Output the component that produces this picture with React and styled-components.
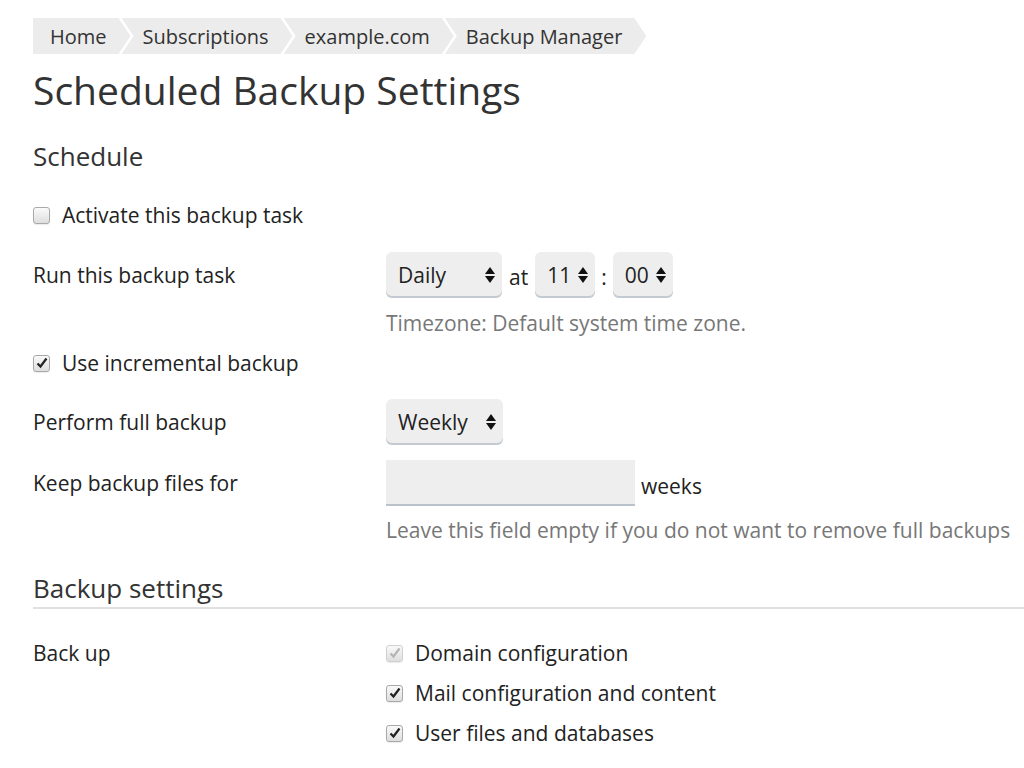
import React from 'react';
import styled, { createGlobalStyle } from 'styled-components';

const GlobalStyle = createGlobalStyle`
  html, body {
    margin: 0;
    padding: 0;
    background: #fff;
  }
  body {
    font-family: "Open Sans", "Noto Sans", sans-serif;
    color: #222;
    font-size: 21px;
    overflow: hidden;
  }
`;

const Page = styled.div`
  padding: 18px 0 0 33px;
  width: 1100px;
`;

const Crumbs = styled.nav`
  display: flex;
  height: 36px;
`;

const Crumb = styled.a`
  display: flex;
  align-items: center;
  height: 36px;
  background: #ececec;
  color: #333;
  text-decoration: none;
  font-size: 20px;
  padding: 0 24px 0 ${p => (p.$first ? '17px' : '21px')};
  margin-left: ${p => (p.$first ? '0' : '-9px')};
  clip-path: ${p =>
    p.$first
      ? 'polygon(0 0, calc(100% - 12px) 0, 100% 50%, calc(100% - 12px) 100%, 0 100%)'
      : 'polygon(0 0, calc(100% - 12px) 0, 100% 50%, calc(100% - 12px) 100%, 0 100%, 12px 50%)'};
`;

const Title = styled.h1`
  margin: 12px 0 0;
  font-size: 39px;
  line-height: 48px;
  font-weight: 400;
  color: #333;
`;

const SectionTitle = styled.h2`
  margin: ${p => p.$top}px 0 0;
  font-size: 26px;
  line-height: 32px;
  font-weight: 400;
  color: #333;
  padding-bottom: ${p => (p.$line ? '3px' : '0')};
  border-bottom: ${p => (p.$line ? '2px solid #e0e0e0' : 'none')};
`;

const Row = styled.div`
  display: flex;
  align-items: ${p => (p.$top ? 'flex-start' : 'center')};
  margin-top: ${p => p.$gap}px;
  min-height: 28px;
`;

const Label = styled.div`
  width: 353px;
  flex-shrink: 0;
  line-height: 28px;
`;

const Controls = styled.div`
  display: flex;
  align-items: center;
`;

const Stack = styled.div`
  display: flex;
  flex-direction: column;
  gap: 12px;
`;

const Hint = styled.div`
  margin: ${p => p.$gap}px 0 0 353px;
  color: #777;
  line-height: 28px;
`;

const CheckLine = styled.label`
  display: flex;
  align-items: center;
  gap: 12px;
  line-height: 28px;
`;

const Box = styled.span`
  width: 15px;
  height: 15px;
  border-radius: 3px;
  border: 1px solid ${p => (p.$disabled ? '#d0d0d0' : '#a9a9a9')};
  background: linear-gradient(#fafafa, #dedede);
  display: flex;
  align-items: center;
  justify-content: center;
  box-shadow: 0 1px 1px rgba(0, 0, 0, 0.08);
  flex-shrink: 0;
`;

const Select = styled.div`
  display: flex;
  align-items: center;
  justify-content: space-between;
  box-sizing: border-box;
  width: ${p => p.$w}px;
  height: 46px;
  padding: 0 6px 0 12px;
  background: #eeeeee;
  border-radius: 6px;
  box-shadow: inset 0 -2px 0 #c3cad1;
  color: #222;
`;

const Sep = styled.span`
  margin: 0 ${p => p.$m}px;
  line-height: 28px;
  padding-top: 4px;
`;

const TextField = styled.div`
  box-sizing: border-box;
  width: 249px;
  height: 46px;
  background: #eeeeee;
  border-bottom: 2px solid #b9c2ca;
`;

const Unit = styled.span`
  margin-left: 6px;
  padding-top: 6px;
`;

const Arrows = () => (
  <svg width="12" height="18" viewBox="0 0 12 18">
    <path d="M6 1 L11 8 L1 8 Z" fill="#111" />
    <path d="M1 10 L11 10 L6 17 Z" fill="#111" />
  </svg>
);

const Checkbox = ({ checked, disabled, children }) => (
  <CheckLine>
    <Box $disabled={disabled}>
      {checked && (
        <svg width="12" height="12" viewBox="0 0 12 12">
          <path
            d="M1.5 6.5 L4.5 9.5 L10.5 1.5"
            fill="none"
            stroke={disabled ? '#b5b5b5' : '#222'}
            strokeWidth="2.2"
          />
        </svg>
      )}
    </Box>
    {children}
  </CheckLine>
);

export default function App() {
  return (
    <Page>
      <GlobalStyle />
      <Crumbs>
        <Crumb $first href="#">Home</Crumb>
        <Crumb href="#">Subscriptions</Crumb>
        <Crumb href="#">example.com</Crumb>
        <Crumb href="#">Backup Manager</Crumb>
      </Crumbs>
      <Title>Scheduled Backup Settings</Title>

      <SectionTitle $top={26}>Schedule</SectionTitle>
      <Row $gap={29}>
        <Checkbox>Activate this backup task</Checkbox>
      </Row>
      <Row $gap={23}>
        <Label>Run this backup task</Label>
        <Controls>
          <Select $w={116}>Daily<Arrows /></Select>
          <Sep $m={7}>at</Sep>
          <Select $w={60}>11<Arrows /></Select>
          <Sep $m={6}>:</Sep>
          <Select $w={60}>00<Arrows /></Select>
        </Controls>
      </Row>
      <Hint $gap={11}>Timezone: Default system time zone.</Hint>
      <Row $gap={12}>
        <Checkbox checked>Use incremental backup</Checkbox>
      </Row>
      <Row $gap={22}>
        <Label>Perform full backup</Label>
        <Select $w={117}>Weekly<Arrows /></Select>
      </Row>
      <Row $gap={15}>
        <Label>Keep backup files for</Label>
        <Controls>
          <TextField />
          <Unit>weeks</Unit>
        </Controls>
      </Row>
      <Hint $gap={10}>Leave this field empty if you do not want to remove full backups</Hint>

      <SectionTitle $top={28} $line>Backup settings</SectionTitle>
      <Row $gap={30} $top>
        <Label>Back up</Label>
        <Stack>
          <Checkbox checked disabled>Domain configuration</Checkbox>
          <Checkbox checked>Mail configuration and content</Checkbox>
          <Checkbox checked>User files and databases</Checkbox>
        </Stack>
      </Row>
    </Page>
  );
}
